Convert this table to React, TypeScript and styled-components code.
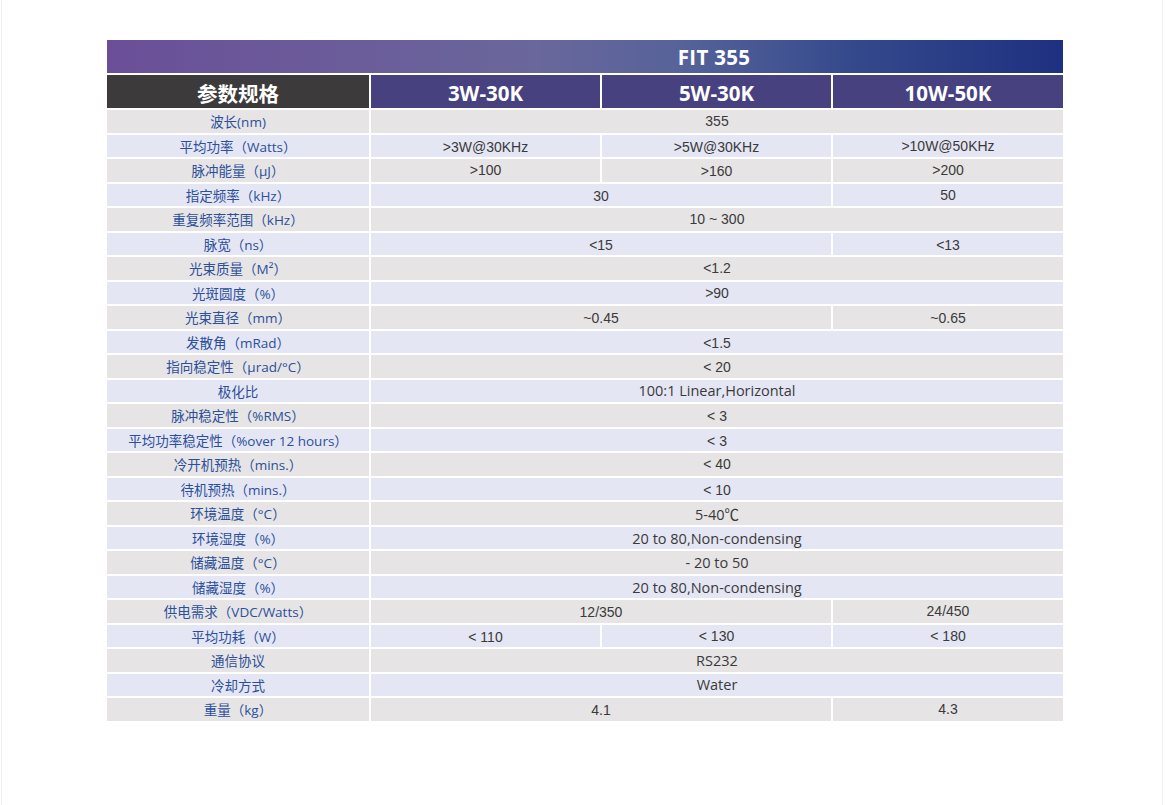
import styled, { createGlobalStyle } from 'styled-components';

const GlobalStyle = createGlobalStyle`
  html, body {
    margin: 0;
    padding: 0;
    background: #ffffff;
  }
`;

const Page = styled.div`
  box-sizing: border-box;
  width: 1162px;
  min-height: 805px;
  margin-left: 1px;
  border-left: 1px solid #efefef;
  border-right: 1px solid #efefef;
  padding: 40px 0 0 105px;
`;

const SpecTable = styled.div`
  display: grid;
  width: 956px;
  grid-template-columns: 262px 229px 229px 230px;
  grid-template-rows: 33px 33px;
  grid-auto-rows: 22.5px;
  gap: 2px;
  background: #ffffff;
`;

const TitleBar = styled.div`
  grid-column: 1 / span 4;
  display: flex;
  align-items: center;
  justify-content: center;
  padding-left: 258px;
  background: linear-gradient(
    90deg,
    #6a4f98 0%,
    #6b5c9a 25%,
    #69679b 45%,
    #56639a 60%,
    #34498c 78%,
    #1e3080 100%
  );
  color: #ffffff;
  font-family: 'Open Sans', 'Noto Sans CJK SC', sans-serif;
  font-weight: 700;
  font-size: 20.5px;
  letter-spacing: 0.3px;
`;

const HeadCell = styled.div<{ $dark?: boolean }>`
  display: flex;
  align-items: center;
  justify-content: center;
  padding-top: 3px;
  background: ${(p) => (p.$dark ? '#3c3a3b' : '#47417f')};
  color: #ffffff;
  font-family: 'Open Sans', 'Noto Sans CJK SC', sans-serif;
  font-weight: 700;
  font-size: 20.5px;
`;

const LabelCell = styled.div<{ $alt: boolean }>`
  display: flex;
  align-items: center;
  justify-content: center;
  background: ${(p) => (p.$alt ? '#e5e6f4' : '#e6e4e5')};
  color: #2b4f9b;
  font-family: 'Open Sans', 'Noto Sans CJK SC', sans-serif;
  font-size: 13.5px;
  white-space: nowrap;
`;

const ValueCell = styled.div<{ $alt: boolean; $span: number; $soft?: boolean; $drop?: number }>`
  grid-column: span ${(p) => p.$span};
  display: flex;
  align-items: center;
  justify-content: center;
  padding-top: ${(p) => (p.$drop ?? 0) * 2}px;
  box-sizing: border-box;
  background: ${(p) => (p.$alt ? '#e5e6f4' : '#e6e4e5')};
  color: #3a3a3a;
  font-family: ${(p) =>
    p.$soft
      ? "'Open Sans', 'Noto Sans CJK SC', sans-serif"
      : "'Liberation Sans', Arial, sans-serif"};
  font-size: ${(p) => (p.$soft ? '14.5px' : '14px')};
  white-space: nowrap;
`;

type Cell = { text: string; span?: number; soft?: boolean; drop?: number };
type Row = { label: string; cells: Cell[] };

const rows: Row[] = [
  { label: '波长(nm)', cells: [{ text: '355', span: 3 }] },
  {
    label: '平均功率（Watts）',
    cells: [{ text: '>3W@30KHz', drop: 1 }, { text: '>5W@30KHz', drop: 1 }, { text: '>10W@50KHz' }],
  },
  {
    label: '脉冲能量（μJ）',
    cells: [{ text: '>100' }, { text: '>160', drop: 1 }, { text: '>200' }],
  },
  { label: '指定频率（kHz）', cells: [{ text: '30', span: 2, drop: 1 }, { text: '50' }] },
  { label: '重复频率范围（kHz）', cells: [{ text: '10 ~ 300', span: 3 }] },
  { label: '脉宽（ns）', cells: [{ text: '<15', span: 2, drop: 1 }, { text: '<13', drop: 1 }] },
  { label: '光束质量（M²）', cells: [{ text: '<1.2', span: 3 }] },
  { label: '光斑圆度（%）', cells: [{ text: '>90', span: 3 }] },
  { label: '光束直径（mm）', cells: [{ text: '~0.45', span: 2, drop: 1 }, { text: '~0.65', drop: 1 }] },
  { label: '发散角（mRad）', cells: [{ text: '<1.5', span: 3, drop: 1 }] },
  { label: '指向稳定性（μrad/°C）', cells: [{ text: '< 20', span: 3, drop: 1 }] },
  { label: '极化比', cells: [{ text: '100:1 Linear,Horizontal', span: 3, soft: true }] },
  { label: '脉冲稳定性（%RMS）', cells: [{ text: '< 3', span: 3, drop: 1 }] },
  { label: '平均功率稳定性（%over 12 hours）', cells: [{ text: '< 3', span: 3, drop: 1 }] },
  { label: '冷开机预热（mins.）', cells: [{ text: '< 40', span: 3 }] },
  { label: '待机预热（mins.）', cells: [{ text: '< 10', span: 3, drop: 1 }] },
  { label: '环境温度（°C）', cells: [{ text: '5-40℃', span: 3, soft: true }] },
  { label: '环境湿度（%）', cells: [{ text: '20 to 80,Non-condensing', span: 3, soft: true, drop: 1 }] },
  { label: '储藏温度（°C）', cells: [{ text: '- 20 to 50', span: 3, soft: true }] },
  { label: '储藏湿度（%）', cells: [{ text: '20 to 80,Non-condensing', span: 3, soft: true, drop: 1 }] },
  { label: '供电需求（VDC/Watts）', cells: [{ text: '12/350', span: 2, drop: 1 }, { text: '24/450' }] },
  {
    label: '平均功耗（W）',
    cells: [{ text: '< 110', drop: 1 }, { text: '< 130' }, { text: '< 180' }],
  },
  { label: '通信协议', cells: [{ text: 'RS232', span: 3, soft: true }] },
  { label: '冷却方式', cells: [{ text: 'Water', span: 3, soft: true }] },
  { label: '重量（kg）', cells: [{ text: '4.1', span: 2, drop: 1 }, { text: '4.3' }] },
];

export default function App() {
  return (
    <>
      <GlobalStyle />
      <Page>
        <SpecTable>
          <TitleBar>FIT 355</TitleBar>
          <HeadCell $dark>参数规格</HeadCell>
          <HeadCell>3W-30K</HeadCell>
          <HeadCell>5W-30K</HeadCell>
          <HeadCell>10W-50K</HeadCell>
          {rows.map((row, i) => {
            const alt = i % 2 === 1;
            return [
              <LabelCell key={`l${i}`} $alt={alt}>
                {row.label}
              </LabelCell>,
              ...row.cells.map((cell, j) => (
                <ValueCell
                  key={`v${i}-${j}`}
                  $alt={alt}
                  $span={cell.span ?? 1}
                  $soft={cell.soft}
                  $drop={cell.drop}
                >
                  {cell.text}
                </ValueCell>
              )),
            ];
          })}
        </SpecTable>
      </Page>
    </>
  );
}
